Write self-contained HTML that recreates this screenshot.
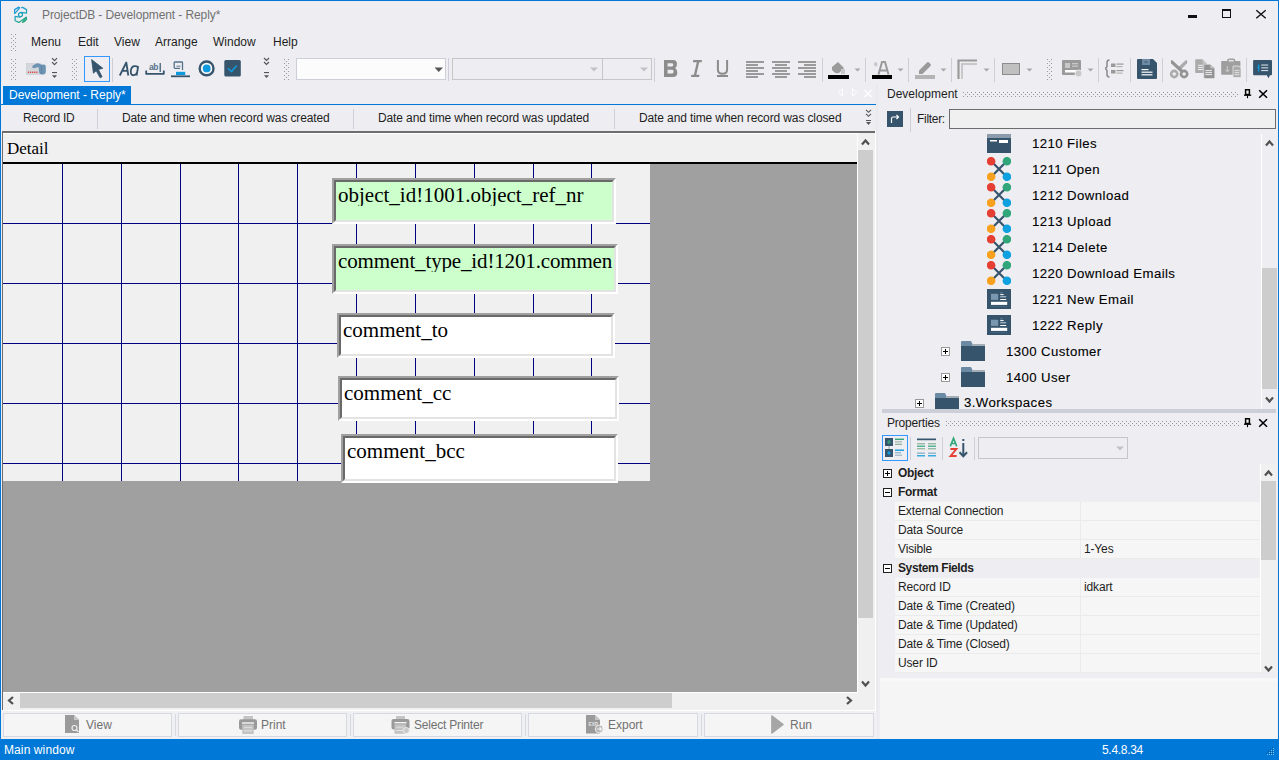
<!DOCTYPE html>
<html><head><meta charset="utf-8">
<style>
*{margin:0;padding:0;box-sizing:border-box}
html,body{width:1279px;height:760px;overflow:hidden;background:#eeeef2;font-family:"Liberation Sans",sans-serif;font-size:12px;color:#1e1e1e;position:relative}
.a{position:absolute}
.t{position:absolute;white-space:nowrap;line-height:12px;font-size:12px}
.ser{font-family:"Liberation Serif",serif;color:#000}
.grip{position:absolute;width:6px;background-image:linear-gradient(#a0a0a8,#a0a0a8),linear-gradient(#a0a0a8,#a0a0a8);background-size:1px 1px,1px 1px;background-repeat:no-repeat}
.sep{position:absolute;width:1px;background:#ccced8}
.hl{position:absolute;height:1px;background:#000080}
.vl{position:absolute;width:1px;background:#000080}
.fld{position:absolute;border-style:solid;border-width:2px;border-color:#a0a0a0 #fff #fff #a0a0a0}
.fld>div{position:absolute;left:0;top:0;right:0;bottom:0;border-style:solid;border-width:2px;border-color:#696969 #e3e3e3 #e3e3e3 #696969}
.ftx{position:absolute;font-family:"Liberation Serif",serif;font-size:21px;line-height:21px;color:#000;white-space:nowrap;overflow:hidden}
.btn{position:absolute;top:713px;height:24px;border:1px solid #d6d8e2;background:#f5f5f5}
.btx{position:absolute;top:719px;color:#717171}
.tr{position:absolute;white-space:nowrap;line-height:12px;font-size:12px;letter-spacing:0.38px;color:#000;transform:scaleX(1.1);transform-origin:0 0;-webkit-text-stroke:0.1px #000}
.pr{position:absolute;left:895px;width:366px;height:19px;background:#f6f6f6;border-bottom:1px solid #ebebeb}
.pr>.vd{position:absolute;left:185px;top:0;width:1px;height:18px;background:#ebebeb}
.pt{position:absolute;white-space:nowrap;line-height:12px;font-size:12px;color:#1e1e1e;letter-spacing:-0.15px}
.exp{position:absolute;width:9px;height:9px;border:1px solid #1e1e1e;background:#fff}
.texp{position:absolute;width:9px;height:9px;border:1px solid #9a9a9a;background:#fff}
.plus:before{content:"";position:absolute;left:1px;top:3px;width:5px;height:1px;background:#000}
.plus:after{content:"";position:absolute;left:3px;top:1px;width:1px;height:5px;background:#000}
.minus:before{content:"";position:absolute;left:1px;top:3px;width:5px;height:1px;background:#000}
</style></head><body>
<svg width="0" height="0" style="position:absolute"><defs><pattern id="gp" width="4" height="4" patternUnits="userSpaceOnUse"><rect x="0" y="0" width="1" height="1" fill="#999"/><rect x="2" y="2" width="1" height="1" fill="#999"/></pattern></defs></svg>
<!-- window border -->
<div class="a" style="left:0;top:0;width:1279px;height:1px;background:#0078d7"></div>
<div class="a" style="left:0;top:0;width:1px;height:760px;background:#0078d7"></div>
<div class="a" style="left:1278px;top:0;width:1px;height:760px;background:#0078d7"></div>

<!-- ===== title bar ===== -->
<svg class="a" style="left:10px;top:4px" width="22" height="22" viewBox="10 4 22 22">
 <defs><linearGradient id="lg" gradientUnits="userSpaceOnUse" x1="15" y1="7" x2="24" y2="23"><stop offset="0" stop-color="#1a96e0"/><stop offset="0.55" stop-color="#21a3b8"/><stop offset="1" stop-color="#2aa86e"/></linearGradient></defs>
 <g fill="none" stroke="url(#lg)" stroke-width="1.25" stroke-linejoin="round">
 <path d="M14.6 13.4 L14.6 9.6 L18.9 7.1 L19.7 7.8 L15.4 12.9 Z"/>
 <path d="M21.2 7.6 L22.6 7.4 L26.5 9.6 L26.5 13.2 L20.8 12.4"/>
 <path d="M18.6 13.6 L20.5 12.5 L22.4 13.6 L22.4 15.8 L20.5 16.9 L18.6 15.8 Z"/>
 <path d="M14.6 16.4 L20.2 17.1 M15 16.6 L15.2 20.8 L18.8 22.4 L26.2 17.2"/>
 <path d="M22.4 22.3 L26.4 17.2 L26.4 19.6 L24.6 21.4 Z"/>
 </g>
</svg>
<div class="t" style="left:42px;top:9px;color:#717171;letter-spacing:-0.1px">ProjectDB - Development - Reply*</div>
<div class="a" style="left:1188px;top:15px;width:9px;height:3px;background:#111"></div>
<div class="a" style="left:1222px;top:9px;width:9px;height:9px;border:1px solid #111;border-top:2px solid #111"></div>
<svg class="a" style="left:1255px;top:9px" width="12" height="11"><path d="M1.3 1.2 L10.7 9.3 M10.7 1.2 L1.3 9.3" stroke="#111" stroke-width="1.4"/></svg>

<!-- ===== menu bar ===== -->
<svg class="a" style="left:11px;top:34px" width="5" height="18"><rect width="5" height="18" fill="url(#gp)"/></svg>
<div class="t" style="left:31px;top:36px">Menu</div>
<div class="t" style="left:78px;top:36px">Edit</div>
<div class="t" style="left:114px;top:36px">View</div>
<div class="t" style="left:155px;top:36px">Arrange</div>
<div class="t" style="left:213px;top:36px">Window</div>
<div class="t" style="left:273px;top:36px">Help</div>

<!-- ===== toolbar ===== -->
<svg class="a" style="left:11px;top:59px" width="5" height="21"><rect width="5" height="21" fill="url(#gp)"/></svg>
<svg class="a" style="left:24px;top:60px" width="24" height="18" viewBox="24 60 24 18">
 <rect x="26.2" y="63.4" width="14.2" height="11.2" fill="#d3d7dc" stroke="#c6cad0" stroke-width="0.5"/>
 <g fill="#e53935"><rect x="27.8" y="71.6" width="1.3" height="1.3"/><rect x="29.9" y="71.6" width="1.3" height="1.3"/><rect x="32" y="71.6" width="1.3" height="1.3"/><rect x="34.1" y="71.6" width="1.3" height="1.3"/><rect x="36.2" y="71.6" width="1.3" height="1.3"/></g>
 <path d="M32.3 67.2 Q32 65.8 33.5 65 L36.5 63.5 Q38 63 39.5 63.8 L41.5 64.8 L44 64.4 Q45.8 64.4 45.8 66.5 L45.8 72 Q45.8 74.4 43.5 74.4 L41.5 74.4 Q39.2 74.4 39 72 L38.6 67 L34.2 68.2 Q32.8 68.4 32.3 67.2 Z" fill="#6f93b2"/>
 <path d="M41.5 64.8 L41.5 74" stroke="#5c7f9e" stroke-width="0.8"/>
</svg>
<svg class="a" style="left:51px;top:57px" width="7" height="22" viewBox="0 0 7 22">
 <path d="M1 1.2 L3.5 3.7 L6 1.2 M1 5.2 L3.5 7.7 L6 5.2" fill="none" stroke="#555" stroke-width="1.2"/>
 <rect x="1" y="15" width="5" height="1.1" fill="#555"/><path d="M1 18.2 L6 18.2 L3.5 21 Z" fill="#555"/>
</svg>
<svg class="a" style="left:72px;top:59px" width="5" height="21"><rect width="5" height="21" fill="url(#gp)"/></svg>
<div class="a" style="left:84px;top:56px;width:26px;height:26px;border:1px solid #3399ff"></div>
<svg class="a" style="left:84px;top:56px" width="26" height="26" viewBox="84 56 26 26">
 <path d="M91.6 59.6 L102.9 68.3 L98.4 69.5 L102.1 76.8 L100.1 77.8 L96.2 70.8 L93.4 73.2 Z" fill="#36556d" stroke="#36556d" stroke-width="0.8" stroke-linejoin="round"/>
</svg>
<div class="sep" style="left:112px;top:58px;height:24px"></div>
<svg class="a" style="left:114px;top:54px" width="80" height="28" viewBox="114 54 80 28">
 <path d="M119.8 75.5 L126.3 62.5 L128.3 75.5 M122.5 70.8 L127.5 70.8" fill="none" stroke="#36556d" stroke-width="1.8" stroke-linejoin="round"/>
 <path d="M138.2 66.2 L136.6 75.5 M137.9 67.2 Q136.5 65.8 134.2 66.2 Q131.2 66.8 130.8 71 Q130.5 75.6 133.6 75.2 Q136 75 137.2 72" fill="none" stroke="#36556d" stroke-width="1.8"/>
 <text x="149" y="69.8" font-family="Liberation Sans" font-size="8.5" font-weight="bold" fill="#55718a" letter-spacing="-0.4">ab</text>
 <rect x="159.6" y="63" width="1.2" height="9" fill="#36556d"/>
 <path d="M146.2 70.5 L146.2 73.8 L163.8 73.8 L163.8 70.5" fill="none" stroke="#36556d" stroke-width="1.8" stroke-linejoin="round"/>
 <path d="M174.2 62 L181.8 62 Q182.5 62 182.5 62.7 L182.5 70 M174.2 62 L174.2 67.5 Q174.2 68.3 175 68.3 L180 68.3" fill="none" stroke="#55718a" stroke-width="1.3"/>
 <rect x="176.5" y="65.5" width="4" height="1.5" fill="#8fa0b0"/>
 <rect x="176" y="71.8" width="9.2" height="3.2" fill="#0e9ade"/>
 <rect x="171" y="75.4" width="19" height="1.8" fill="#36556d"/>
</svg>
<svg class="a" style="left:197px;top:59px" width="19" height="19" viewBox="0 0 19 19">
 <circle cx="9.6" cy="9.4" r="6.9" fill="#f7f7f9" stroke="#36556d" stroke-width="2.4"/>
 <circle cx="9.7" cy="9.4" r="3.9" fill="#0e9ade"/>
</svg>
<svg class="a" style="left:224px;top:60px" width="18" height="18" viewBox="0 0 18 18">
 <rect x="0.3" y="0.1" width="16.5" height="16.5" rx="1.5" fill="#36556d"/>
 <path d="M4 8.2 L7.5 11.6 L12.7 5.4" fill="none" stroke="#0e9ade" stroke-width="1.5"/>
</svg>
<svg class="a" style="left:263px;top:57px" width="7" height="22" viewBox="0 0 7 22">
 <path d="M1 1 L3.5 3.5 L6 1 M1 5 L3.5 7.5 L6 5" fill="none" stroke="#555" stroke-width="1.2"/>
 <rect x="1" y="15" width="5" height="1.1" fill="#555"/><path d="M1 18.2 L6 18.2 L3.5 21 Z" fill="#555"/>
</svg>
<svg class="a" style="left:284px;top:59px" width="5" height="21"><rect width="5" height="21" fill="url(#gp)"/></svg>
<!-- combos -->
<div class="a" style="left:296px;top:58px;width:150px;height:22px;border:1px solid #ccced8;background:#fcfcfc"></div>
<svg class="a" style="left:434px;top:67px" width="10" height="6"><path d="M0.5 0.5 L9 0.5 L4.75 5 Z" fill="#555"/></svg>
<div class="sep" style="left:448px;top:58px;height:23px"></div>
<div class="a" style="left:452px;top:58px;width:151px;height:22px;border:1px solid #c6c6c6"></div>
<div class="a" style="left:602px;top:58px;width:50px;height:22px;border:1px solid #c6c6c6"></div>
<svg class="a" style="left:589px;top:67px" width="10" height="6"><path d="M1 0.5 L9 0.5 L5 4.5 Z" fill="#c2c2c2"/></svg>
<svg class="a" style="left:639px;top:67px" width="10" height="6"><path d="M1 0.5 L9 0.5 L5 4.5 Z" fill="#c2c2c2"/></svg>
<div class="sep" style="left:654px;top:58px;height:24px"></div>
<!-- B I U -->
<svg class="a" style="left:658px;top:56px" width="80" height="26" viewBox="658 56 80 26">
 <path fill-rule="evenodd" fill="#8c8c8c" d="M664 60 L673 60 Q677 60 677 64 Q677 67 675 68 Q677.3 69.2 677.3 72.5 Q677.3 77 673 77 L664 77 Z M667.6 63.2 L667.6 66.4 L672 66.4 Q673.3 66.4 673.3 64.8 Q673.3 63.2 672 63.2 Z M667.6 69.7 L667.6 73.6 L672.2 73.6 Q673.6 73.6 673.6 71.6 Q673.6 69.7 672.2 69.7 Z"/>
 <path fill="#8c8c8c" d="M693.3 60 L702 60 L701.6 62.3 L699.2 62.3 L696.3 74.7 L699.5 74.7 L699.1 77 L691 77 L691.4 74.7 L693.9 74.7 L696.8 62.3 L692.9 62.3 Z"/>
 <path fill="none" stroke="#8c8c8c" stroke-width="2" d="M717.9 60 L717.9 69.5 Q717.9 73.8 722.5 73.8 Q727.1 73.8 727.1 69.5 L727.1 60"/>
 <rect x="717" y="75" width="11" height="2" fill="#8c8c8c"/>
</svg>
<!-- align -->
<svg class="a" style="left:746px;top:61px" width="19" height="17" viewBox="0 0 19 17">
 <g fill="#9a9a9a"><rect x="0" y="0" width="18" height="2"/><rect x="0" y="3" width="12" height="2"/><rect x="0" y="6" width="18" height="2"/><rect x="0" y="9" width="12" height="2"/><rect x="0" y="12" width="18" height="2"/><rect x="0" y="15" width="12" height="2"/></g>
</svg>
<svg class="a" style="left:772px;top:61px" width="19" height="17" viewBox="0 0 19 17">
 <g fill="#9a9a9a"><rect x="0" y="0" width="18" height="2"/><rect x="3" y="3" width="12" height="2"/><rect x="0" y="6" width="18" height="2"/><rect x="3" y="9" width="12" height="2"/><rect x="0" y="12" width="18" height="2"/><rect x="3" y="15" width="12" height="2"/></g>
</svg>
<svg class="a" style="left:798px;top:61px" width="19" height="17" viewBox="0 0 19 17">
 <g fill="#9a9a9a"><rect x="0" y="0" width="18" height="2"/><rect x="6" y="3" width="12" height="2"/><rect x="0" y="6" width="18" height="2"/><rect x="6" y="9" width="12" height="2"/><rect x="0" y="12" width="18" height="2"/><rect x="6" y="15" width="12" height="2"/></g>
</svg>
<div class="sep" style="left:822px;top:58px;height:24px"></div>
<!-- fill color -->
<svg class="a" style="left:828px;top:61px" width="22" height="19" viewBox="0 0 22 19">
 <path d="M4 6 L10 1 L16 7 L11 12 Q8 13 6 11 L4 9 Z" fill="#9a9a9a"/>
 <rect x="13" y="8" width="4" height="5" fill="#c8c8c8"/>
 <rect x="0" y="14" width="21" height="4" fill="#000"/>
</svg>
<svg class="a" style="left:854px;top:68px" width="8" height="5"><path d="M0.5 0.5 L6.5 0.5 L3.5 3.5 Z" fill="#a8a8a8"/></svg>
<div class="sep" style="left:865px;top:58px;height:24px"></div>
<svg class="a" style="left:871px;top:61px" width="22" height="19" viewBox="0 0 22 19">
 <path d="M7.5 13.5 L11 1 L14 1 L17.5 13.5 M9 9.5 L16 9.5" fill="none" stroke="#9a9a9a" stroke-width="2"/>
 <ellipse cx="4.8" cy="3.3" rx="1.6" ry="2.2" fill="#c8c8c8"/>
 <rect x="1" y="14" width="20" height="4" fill="#000"/>
</svg>
<svg class="a" style="left:897px;top:68px" width="8" height="5"><path d="M0.5 0.5 L6.5 0.5 L3.5 3.5 Z" fill="#a8a8a8"/></svg>
<div class="sep" style="left:908px;top:58px;height:24px"></div>
<svg class="a" style="left:914px;top:61px" width="22" height="19" viewBox="0 0 22 19">
 <path d="M5 13 L5 9.5 L13 1.5 Q14 0.5 15 1.5 L16.5 3 Q17.5 4 16.5 5 L8.5 13 Z" fill="#9a9a9a"/>
 <rect x="1" y="14" width="20" height="4" fill="#b4b4b4"/>
</svg>
<svg class="a" style="left:940px;top:68px" width="8" height="5"><path d="M0.5 0.5 L6.5 0.5 L3.5 3.5 Z" fill="#a8a8a8"/></svg>
<div class="sep" style="left:951px;top:58px;height:24px"></div>
<svg class="a" style="left:957px;top:59px" width="22" height="21" viewBox="0 0 22 21">
 <path d="M1.5 20 L1.5 1.5 L20 1.5" fill="none" stroke="#9a9a9a" stroke-width="2.2"/>
 <path d="M5 20 L5 5 L20 5" fill="none" stroke="#c8c8c8" stroke-width="2"/>
</svg>
<svg class="a" style="left:983px;top:68px" width="8" height="5"><path d="M0.5 0.5 L6.5 0.5 L3.5 3.5 Z" fill="#a8a8a8"/></svg>
<div class="sep" style="left:994px;top:58px;height:24px"></div>
<div class="a" style="left:1002px;top:63px;width:18px;height:12px;background:#c0c0c0;border:1.5px solid #8c8c8c"></div>
<svg class="a" style="left:1026px;top:68px" width="8" height="5"><path d="M0.5 0.5 L6.5 0.5 L3.5 3.5 Z" fill="#a8a8a8"/></svg>
<svg class="a" style="left:1047px;top:59px" width="5" height="21"><rect width="5" height="21" fill="url(#gp)"/></svg>
<svg class="a" style="left:1062px;top:60px" width="21" height="18" viewBox="0 0 21 18">
 <rect x="0" y="0" width="19" height="15" rx="1" fill="#9a9a9a"/>
 <rect x="3" y="3" width="5" height="5" fill="#c8c8c8"/><rect x="10" y="3" width="6" height="1.3" fill="#c8c8c8"/><rect x="10" y="5.5" width="6" height="1.3" fill="#c8c8c8"/>
 <rect x="3" y="10" width="13" height="2.5" fill="#fff"/>
 <circle cx="16.5" cy="13.5" r="3.5" fill="#c8c8c8" stroke="#eee" stroke-width="1"/>
</svg>
<svg class="a" style="left:1087px;top:68px" width="8" height="5"><path d="M0.5 0.5 L6.5 0.5 L3.5 3.5 Z" fill="#a8a8a8"/></svg>
<div class="sep" style="left:1098px;top:58px;height:24px"></div>
<svg class="a" style="left:1105px;top:59px" width="20" height="19" viewBox="0 0 20 19">
 <path d="M4.5 1 Q2 1 2 3.5 L2 7.5 L0.5 9.5 L2 11.5 L2 15.5 Q2 18 4.5 18" fill="none" stroke="#8a8a8a" stroke-width="1.5"/>
 <rect x="6" y="4.5" width="4.5" height="3.5" fill="#9a9a9a"/><rect x="11.5" y="4.5" width="7" height="1.2" fill="#9a9a9a"/><rect x="11.5" y="7" width="6" height="1.2" fill="#b4b4b4"/>
 <rect x="6" y="11" width="4.5" height="3.5" fill="#9a9a9a"/><rect x="11.5" y="11" width="7" height="1.2" fill="#9a9a9a"/><rect x="11.5" y="13.5" width="6" height="1.2" fill="#b4b4b4"/>
</svg>
<div class="sep" style="left:1130px;top:58px;height:24px"></div>
<svg class="a" style="left:1137px;top:59px" width="21" height="21" viewBox="0 0 21 21">
 <path d="M0 1 Q0 0 1 0 L16 0 L20 4 L20 19 Q20 20 19 20 L1 20 Q0 20 0 19 Z" fill="#36556d"/>
 <rect x="5" y="0" width="8" height="6" fill="#6c8aa3"/><rect x="7.5" y="2.5" width="3" height="1" fill="#36556d"/>
 <rect x="4.5" y="10" width="7" height="1.2" fill="#fff"/><rect x="4.5" y="12.6" width="11" height="1.2" fill="#fff"/><rect x="4.5" y="15.2" width="11" height="1.2" fill="#fff"/>
</svg>
<div class="sep" style="left:1162px;top:58px;height:24px"></div>
<svg class="a" style="left:1166px;top:56px" width="52" height="26" viewBox="1166 56 52 26">
 <path d="M1186.3 59.8 Q1188 61.2 1187 63.2 L1181 69.5 L1178.4 67 Z" fill="#ababab"/>
 <path d="M1171.8 59.8 Q1170 61.4 1171.2 63.4 L1181.5 73 L1183.4 70.6 Z" fill="#939393"/>
 <circle cx="1174.2" cy="74" r="3.1" fill="none" stroke="#ababab" stroke-width="2.6"/>
 <circle cx="1184.1" cy="74" r="3.1" fill="none" stroke="#939393" stroke-width="2.6"/>
 <path d="M1196 59.3 L1202.6 59.3 L1206.8 63.5 L1206.8 73 L1196 73 Q1195.2 73 1195.2 72.2 L1195.2 60.1 Q1195.2 59.3 1196 59.3 Z" fill="#ababab"/>
 <path d="M1202.6 59.3 L1206.8 63.5 L1202.6 63.5 Z" fill="#c8c8c8"/>
 <g fill="#eeeef2"><rect x="1198" y="64.8" width="5" height="1"/><rect x="1198" y="66.9" width="5" height="1"/><rect x="1198" y="69" width="5" height="1"/></g>
 <path d="M1203.8 64.2 L1210.2 64.2 L1214.8 68.6 L1214.8 77.6 Q1214.8 78.6 1213.8 78.6 L1204.8 78.6 Q1203.8 78.6 1203.8 77.6 Z" fill="#939393" stroke="#eeeef2" stroke-width="0.6"/>
 <path d="M1210.2 64.2 L1214.8 68.6 L1210.2 68.6 Z" fill="#bdbdbd"/>
 <g fill="#eeeef2"><rect x="1205.4" y="70.1" width="6.6" height="1"/><rect x="1205.4" y="72.1" width="6.6" height="1"/><rect x="1205.4" y="74.1" width="6.6" height="1"/></g>
</svg>
<svg class="a" style="left:1218px;top:56px" width="26" height="26" viewBox="1218 56 26 26">
 <rect x="1221.2" y="61" width="19.2" height="13.8" rx="0.8" fill="#9e9e9e"/>
 <path d="M1227.8 62 L1227.8 60.8 Q1227.8 59.2 1229.4 59.2 L1233 59.2 Q1234.6 59.2 1234.6 60.8 L1234.6 62" fill="none" stroke="#9e9e9e" stroke-width="1.6"/>
 <rect x="1228.6" y="61.2" width="5.2" height="1" fill="#c0c0c0"/>
 <path d="M1227.4 66 L1227.4 71.5 M1225.5 69.6 L1227.4 71.6 L1229.3 69.6" fill="none" stroke="#c4c4c4" stroke-width="1.1"/>
 <path d="M1233 66 L1239 66 L1241 68 L1241 77.5 L1233 77.5 Z" fill="#ababab" stroke="#eeeef2" stroke-width="0.7"/>
 <g fill="#e6e6e6"><rect x="1234.6" y="70.2" width="4.8" height="0.9"/><rect x="1234.6" y="72.2" width="4.8" height="0.9"/><rect x="1234.6" y="74.2" width="4.8" height="0.9"/></g>
</svg>
<div class="sep" style="left:1246px;top:58px;height:24px"></div>
<svg class="a" style="left:1252px;top:59px" width="22" height="21" viewBox="1252 59 22 21">
 <path d="M1254 60.1 L1271 60.1 Q1272 60.1 1272 61.1 L1272 74.3 Q1272 75.3 1271 75.3 L1270 75.3 L1268.5 78.2 L1266.8 75.3 L1254 75.3 Q1253.1 75.3 1253.1 74.3 L1253.1 61.1 Q1253.1 60.1 1254 60.1 Z" fill="#36556d"/>
 <circle cx="1258.7" cy="65.4" r="0.9" fill="#0e9ade"/><path d="M1257.3 67.4 L1258.7 66.9 L1258.7 71.4" fill="none" stroke="#0e9ade" stroke-width="1.3"/>
 <g fill="#d5dde4"><rect x="1261.2" y="64.5" width="7" height="1.1"/><rect x="1261.2" y="67.3" width="7" height="1.1"/><rect x="1261.2" y="70" width="7" height="1.1"/></g>
</svg>

<!-- ===== document tab ===== -->
<div class="a" style="left:3px;top:86px;width:128px;height:18px;background:#0078d7"></div>
<div class="t" style="left:9px;top:89px;color:#fff">Development - Reply*</div>
<svg class="a" style="left:837px;top:88px" width="38" height="10" viewBox="0 0 38 10">
 <path d="M5.5 0.7 L5.5 8.3 L1.2 4.5 Z" fill="none" stroke="#fff" stroke-width="0.9"/>
 <path d="M15.5 0.7 L15.5 8.3 L19.8 4.5 Z" fill="none" stroke="#fff" stroke-width="0.9"/>
 <path d="M27.5 2 L34.5 9 M34.5 2 L27.5 9" stroke="#fff" stroke-width="1.3"/>
</svg>
<div class="a" style="left:0;top:104px;width:876px;height:1px;background:#0078d7"></div>

<!-- ===== column header ===== -->
<div class="t" style="left:23px;top:112px;letter-spacing:-0.3px">Record ID</div>
<div class="sep" style="left:97px;top:109px;height:20px"></div>
<div class="t" style="left:122px;top:112px;letter-spacing:-0.12px">Date and time when record was created</div>
<div class="sep" style="left:353px;top:109px;height:20px"></div>
<div class="t" style="left:378px;top:112px;letter-spacing:-0.12px">Date and time when record was updated</div>
<div class="sep" style="left:614px;top:109px;height:20px"></div>
<div class="t" style="left:639px;top:112px;letter-spacing:-0.12px">Date and time when record was closed</div>
<svg class="a" style="left:865px;top:109px" width="7" height="17" viewBox="0 0 7 17">
 <path d="M1 0.8 L3.5 3.3 L6 0.8 M1 4.8 L3.5 7.3 L6 4.8" fill="none" stroke="#555" stroke-width="1.1"/>
 <rect x="1" y="11" width="5" height="1" fill="#555"/><path d="M1 13 L6 13 L3.5 16 Z" fill="#555"/>
</svg>

<!-- ===== design surface ===== -->
<div class="a" style="left:2px;top:131px;width:873px;height:2px;background:#6d6d6d"></div>
<div class="a" style="left:2px;top:131px;width:1px;height:579px;background:#6d6d6d"></div>
<div class="a" style="left:875px;top:131px;width:1px;height:580px;background:#fff"></div><div class="a" style="left:876px;top:85px;width:2px;height:654px;background:#e9e9ee"></div>
<div class="a" style="left:2px;top:710px;width:874px;height:1px;background:#fff"></div>
<div class="a" style="left:3px;top:133px;width:854px;height:559px;background:#a0a0a0"></div>
<div class="a" style="left:3px;top:133px;width:854px;height:1px;background:#fff"></div>
<div class="a" style="left:3px;top:134px;width:854px;height:28px;background:#f0f0f0"></div>
<div class="t ser" style="left:7px;top:140px;font-size:17px;line-height:17px">Detail</div>
<div class="a" style="left:3px;top:162px;width:854px;height:2px;background:#000"></div>
<div class="a" style="left:3px;top:164px;width:647px;height:317px;background:#f0f0f0"></div>
<!-- grid -->
<div class="vl" style="left:62px;top:164px;height:317px"></div>
<div class="vl" style="left:121px;top:164px;height:317px"></div>
<div class="vl" style="left:180px;top:164px;height:317px"></div>
<div class="vl" style="left:238px;top:164px;height:317px"></div>
<div class="vl" style="left:297px;top:164px;height:317px"></div>
<div class="vl" style="left:356px;top:164px;height:317px"></div>
<div class="vl" style="left:415px;top:164px;height:317px"></div>
<div class="vl" style="left:474px;top:164px;height:317px"></div>
<div class="vl" style="left:533px;top:164px;height:317px"></div>
<div class="vl" style="left:591px;top:164px;height:317px"></div>
<div class="hl" style="left:3px;top:223px;width:647px"></div>
<div class="hl" style="left:3px;top:283px;width:647px"></div>
<div class="hl" style="left:3px;top:343px;width:647px"></div>
<div class="hl" style="left:3px;top:403px;width:647px"></div>
<div class="hl" style="left:3px;top:463px;width:647px"></div>
<!-- fields -->
<div class="fld" style="left:332px;top:178px;width:284px;height:46px;background:#ccffcc"><div></div></div>
<div class="ftx" style="left:338px;top:185px;width:274px">object_id!1001.object_ref_nr</div>
<div class="fld" style="left:332px;top:244px;width:286px;height:50px;background:#ccffcc"><div></div></div>
<div class="ftx" style="left:338px;top:251px;width:275px;letter-spacing:-0.15px">comment_type_id!1201.commen</div>
<div class="fld" style="left:337px;top:313px;width:278px;height:45px;background:#fff"><div></div></div>
<div class="ftx" style="left:343px;top:320px;width:268px">comment_to</div>
<div class="fld" style="left:338px;top:376px;width:281px;height:45px;background:#fff"><div></div></div>
<div class="ftx" style="left:344px;top:383px;width:271px">comment_cc</div>
<div class="fld" style="left:341px;top:434px;width:277px;height:49px;background:#fff"><div></div></div>
<div class="ftx" style="left:347px;top:441px;width:267px">comment_bcc</div>

<!-- vertical scrollbar -->
<div class="a" style="left:857px;top:133px;width:1px;height:576px;background:#fff"></div>
<div class="a" style="left:858px;top:133px;width:17px;height:577px;background:#f0f0f0"></div>
<div class="a" style="left:858px;top:150px;width:15px;height:468px;background:#cdcdcd"></div>
<svg class="a" style="left:861px;top:138px" width="9" height="8"><path d="M1 6.5 L4.5 2.5 L8 6.5" fill="none" stroke="#505050" stroke-width="2.2"/></svg>
<svg class="a" style="left:861px;top:680px" width="9" height="8"><path d="M1 1.5 L4.5 5.5 L8 1.5" fill="none" stroke="#505050" stroke-width="2.2"/></svg>
<!-- horizontal scrollbar -->
<div class="a" style="left:3px;top:692px;width:854px;height:1px;background:#fff"></div>
<div class="a" style="left:3px;top:693px;width:871px;height:17px;background:#f0f0f0"></div>
<div class="a" style="left:20px;top:693px;width:652px;height:15px;background:#cdcdcd"></div>
<svg class="a" style="left:7px;top:696px" width="8" height="9"><path d="M6 1 L2 4.5 L6 8" fill="none" stroke="#505050" stroke-width="2.2"/></svg>
<svg class="a" style="left:845px;top:696px" width="8" height="9"><path d="M2 1 L6 4.5 L2 8" fill="none" stroke="#505050" stroke-width="2.2"/></svg>

<!-- ===== bottom buttons ===== -->
<div class="a" style="left:1px;top:711px;width:876px;height:28px;background:#f0f0f3"></div>
<div class="btn" style="left:3px;width:169px"></div>
<div class="btn" style="left:178px;width:169px"></div>
<div class="btn" style="left:353px;width:169px"></div>
<div class="btn" style="left:528px;width:170px"></div>
<div class="btn" style="left:704px;width:170px"></div>
<div class="sep" style="left:175px;top:714px;height:22px;background:#d6d8e2"></div>
<div class="sep" style="left:350px;top:714px;height:22px;background:#d6d8e2"></div>
<div class="sep" style="left:525px;top:714px;height:22px;background:#d6d8e2"></div>
<div class="sep" style="left:701px;top:714px;height:22px;background:#d6d8e2"></div>
<svg class="a" style="left:65px;top:715px" width="16" height="19" viewBox="0 0 16 19">
 <path d="M0 0 L9 0 L14 5 L14 18 L0 18 Z" fill="#9a9a9a"/><path d="M9 0 L14 5 L9 5 Z" fill="#c8c8c8"/>
 <circle cx="9.5" cy="13" r="2.5" fill="none" stroke="#eee" stroke-width="1.2"/><path d="M11.3 14.8 L13.5 17" stroke="#eee" stroke-width="1.3"/>
</svg>
<div class="btx t" style="left:86px">View</div>
<svg class="a" style="left:239px;top:716px" width="18" height="19" viewBox="0 0 18 19">
 <rect x="4.5" y="0" width="9.5" height="4" fill="#c4c4c4"/><rect x="0" y="3.3" width="18" height="10.5" rx="2" fill="#9a9a9a"/>
 <rect x="3" y="6.3" width="12" height="1.4" fill="#f5f5f5"/>
 <rect x="3.3" y="8.6" width="11.4" height="9.4" fill="#c4c4c4"/><rect x="5.3" y="11" width="7.5" height="1" fill="#dcdcdc"/><rect x="5.3" y="14.3" width="7.5" height="1" fill="#e4e4e4"/>
</svg>
<div class="btx t" style="left:261px">Print</div>
<svg class="a" style="left:391px;top:716px" width="19" height="19" viewBox="0 0 19 19">
 <rect x="5" y="0" width="9" height="3.5" fill="#c4c4c4"/><rect x="0.5" y="3" width="18" height="10.5" rx="2" fill="#9a9a9a"/>
 <rect x="3.5" y="6" width="12" height="1.4" fill="#f5f5f5"/>
 <rect x="3.5" y="8.3" width="11.5" height="9.5" fill="#c4c4c4"/><rect x="5.5" y="10.8" width="7" height="1" fill="#dcdcdc"/><rect x="5.5" y="14" width="7" height="1" fill="#e4e4e4"/>
 <circle cx="15.3" cy="14.5" r="3" fill="#c8c8c8" stroke="#f5f5f5" stroke-width="0.8"/>
</svg>
<div class="btx t" style="left:414px;letter-spacing:-0.2px">Select Printer</div>
<svg class="a" style="left:585px;top:715px" width="20" height="20" viewBox="0 0 20 20">
 <path d="M1 0 L10 0 L15 5 L15 18.5 L1 18.5 Z" fill="#9a9a9a"/><path d="M10 0 L15 5 L10 5 Z" fill="#c4c4c4"/>
 <text x="3.6" y="10.5" font-family="Liberation Sans" font-size="4.6" font-weight="bold" fill="#e6e6e6">EXP</text>
 <circle cx="14.2" cy="14" r="3.9" fill="#b0b0b0" stroke="#f5f5f5" stroke-width="0.9"/><path d="M11.8 14 L16.2 14 M14.6 12.3 L16.4 14 L14.6 15.7" fill="none" stroke="#f2f2f2" stroke-width="1.2"/>
</svg>
<div class="btx t" style="left:608px">Export</div>
<svg class="a" style="left:771px;top:715px" width="14" height="19"><path d="M0.8 0.8 L12.2 9.5 L0.8 18.2 Z" fill="#a6a6a6" stroke="#a6a6a6" stroke-width="1.2" stroke-linejoin="round"/></svg>
<div class="btx t" style="left:790px">Run</div>

<!-- ===== right panel: Development ===== -->
<div class="t" style="left:887px;top:88px">Development</div>
<svg class="a" style="left:963px;top:92px" width="276" height="5"><rect width="276" height="5" fill="url(#gp)"/></svg>
<svg class="a" style="left:1243px;top:89px" width="10" height="11" viewBox="0 0 10 11"><path d="M2.6 0.8 L6.4 0.8 L6.4 5.5 L2.6 5.5 Z" fill="none" stroke="#000" stroke-width="1.5"/><path d="M1 6.2 L8.2 6.2" stroke="#000" stroke-width="1.3"/><path d="M4.5 6.5 L4.5 9.2" stroke="#000" stroke-width="1.1"/></svg>
<svg class="a" style="left:1258px;top:89px" width="11" height="10"><path d="M1.2 1.2 L9 8.8 M9 1.2 L1.2 8.8" stroke="#000" stroke-width="1.6"/></svg>
<svg class="a" style="left:887px;top:111px" width="16" height="16" viewBox="0 0 16 16">
 <rect width="16" height="16" fill="#36556d"/>
 <path d="M4.5 12 L4.5 7.5 Q4.5 6 6 6 L11.5 6 M9.5 4 L11.5 6 L9.5 8" fill="none" stroke="#fff" stroke-width="1.2"/>
</svg>
<div class="sep" style="left:910px;top:108px;height:24px"></div>
<div class="t" style="left:917px;top:113px;letter-spacing:-0.3px">Filter:</div>
<div class="a" style="left:949px;top:109px;width:327px;height:20px;border:1px solid #6d6d6d;background:#f0f0f0"></div>

<!-- tree -->
<svg class="a" style="left:987px;top:134px" width="24" height="19" viewBox="0 0 24 19">
 <rect width="24" height="19" fill="#36556d"/><rect width="24" height="4" fill="#8b9bab"/>
 <rect x="3" y="6" width="7" height="1.5" fill="#fff"/><rect x="12" y="6" width="9" height="3" fill="#fff"/>
</svg>
<div class="tr" style="left:1032px;top:138px">1210 Files</div>
<!-- workflow icons defined via symbol -->
<svg width="0" height="0" style="position:absolute">
 <defs><symbol id="wf" viewBox="0 0 24 24" overflow="visible">
  <path d="M4 4 L20 20 M20 4 L4 20" stroke="#36556d" stroke-width="2.2"/>
  <circle cx="4.1" cy="4.2" r="4.3" fill="#e53e33"/><circle cx="19.9" cy="4.2" r="4.3" fill="#31a67a"/>
  <circle cx="4.1" cy="19.8" r="4.3" fill="#f8a11e"/><circle cx="19.9" cy="19.8" r="4.3" fill="#0ea1e0"/>
 </symbol>
 <symbol id="fm" viewBox="0 0 24 20">
  <rect width="24" height="20" fill="#36556d"/>
  <rect x="4" y="5" width="7.2" height="5.9" fill="#7a97b0"/><rect x="13.2" y="3.4" width="2.5" height="0.9" fill="#6f8aa2"/><rect x="13.2" y="5.1" width="3.5" height="1" fill="#fff"/><rect x="13.2" y="7.3" width="6" height="1" fill="#c9d3dc"/><rect x="13.2" y="10" width="6" height="1" fill="#fff"/>
  <rect x="3.2" y="4" width="7" height="0.6" fill="#4f6e87"/><rect x="4" y="12.8" width="16.2" height="3.1" fill="#fff"/><rect x="4" y="17" width="16" height="0.6" fill="#4f6e87"/>
 </symbol>
 <symbol id="fo" viewBox="0 0 24 20">
  <path d="M0 1 Q0 0 1 0 L10 0 L11.5 3 L24 3 L24 5 L0 5 Z" fill="#6b8aa4"/>
  <rect x="11" y="3" width="13" height="2" fill="#a5adb5"/>
  <rect x="0" y="5" width="24" height="15" fill="#36556d"/>
 </symbol></defs>
</svg>
<svg class="a" style="left:987px;top:157px" width="24" height="24"><use href="#wf"/></svg>
<div class="tr" style="left:1032px;top:164px">1211 Open</div>
<svg class="a" style="left:987px;top:183px" width="24" height="24"><use href="#wf"/></svg>
<div class="tr" style="left:1032px;top:190px">1212 Download</div>
<svg class="a" style="left:987px;top:209px" width="24" height="24"><use href="#wf"/></svg>
<div class="tr" style="left:1032px;top:216px">1213 Upload</div>
<svg class="a" style="left:987px;top:235px" width="24" height="24"><use href="#wf"/></svg>
<div class="tr" style="left:1032px;top:242px">1214 Delete</div>
<svg class="a" style="left:987px;top:261px" width="24" height="24"><use href="#wf"/></svg>
<div class="tr" style="left:1032px;top:268px">1220 Download Emails</div>
<svg class="a" style="left:987px;top:289px" width="24" height="20"><use href="#fm"/></svg>
<div class="tr" style="left:1032px;top:294px">1221 New Email</div>
<svg class="a" style="left:987px;top:315px" width="24" height="20"><use href="#fm"/></svg>
<div class="tr" style="left:1032px;top:320px">1222 Reply</div>
<div class="texp plus" style="left:941px;top:347px"></div>
<svg class="a" style="left:961px;top:341px" width="24" height="20"><use href="#fo"/></svg>
<div class="tr" style="left:1006px;top:346px">1300 Customer</div>
<div class="texp plus" style="left:941px;top:373px"></div>
<svg class="a" style="left:961px;top:367px" width="24" height="20"><use href="#fo"/></svg>
<div class="tr" style="left:1006px;top:372px">1400 User</div>
<div class="a" style="left:882px;top:389px;width:378px;height:20px;overflow:hidden">
 <div class="texp plus" style="left:33px;top:10px"></div>
 <svg class="a" style="left:53px;top:4px" width="24" height="20"><use href="#fo"/></svg>
 <div class="tr" style="left:82px;top:8px">3.Workspaces</div>
</div>
<!-- tree scrollbar -->
<div class="a" style="left:1261px;top:134px;width:1px;height:275px;background:#fff"></div>
<div class="a" style="left:1262px;top:268px;width:15px;height:121px;background:#cdcdcd"></div>
<svg class="a" style="left:1265px;top:139px" width="9" height="8"><path d="M1 6.5 L4.5 2.5 L8 6.5" fill="none" stroke="#505050" stroke-width="2.2"/></svg>
<svg class="a" style="left:1265px;top:396px" width="9" height="8"><path d="M1 1.5 L4.5 5.5 L8 1.5" fill="none" stroke="#505050" stroke-width="2.2"/></svg>
<!-- splitter -->
<div class="a" style="left:882px;top:409px;width:394px;height:4px;background:#ccced8"></div>

<!-- ===== Properties ===== -->
<div class="t" style="left:887px;top:417px;letter-spacing:-0.2px">Properties</div>
<svg class="a" style="left:946px;top:421px" width="293" height="5"><rect width="293" height="5" fill="url(#gp)"/></svg>
<svg class="a" style="left:1243px;top:418px" width="10" height="11" viewBox="0 0 10 11"><path d="M2.6 0.8 L6.4 0.8 L6.4 5.5 L2.6 5.5 Z" fill="none" stroke="#000" stroke-width="1.5"/><path d="M1 6.2 L8.2 6.2" stroke="#000" stroke-width="1.3"/><path d="M4.5 6.5 L4.5 9.2" stroke="#000" stroke-width="1.1"/></svg>
<svg class="a" style="left:1258px;top:418px" width="11" height="10"><path d="M1.2 1.2 L9 8.8 M9 1.2 L1.2 8.8" stroke="#000" stroke-width="1.6"/></svg>
<div class="a" style="left:882px;top:435px;width:26px;height:26px;border:1px solid #3399ff"></div>
<svg class="a" style="left:878px;top:430px" width="96" height="36" viewBox="878 430 96 36">
 <rect x="885" y="438" width="8" height="8" fill="#36556d"/><rect x="885" y="449" width="8" height="8" fill="#36556d"/><rect x="888.5" y="446" width="1" height="3" fill="#9aa"/>
 <path d="M889 440 L889 444 M887 442 L891 442" stroke="#31a67a" stroke-width="1.2"/><path d="M889 451 L891 453 L889 455 L887 453 Z" fill="#0e9ade"/>
 <rect x="895" y="438.6" width="9" height="1.4" fill="#31a67a"/><rect x="895" y="441.2" width="7" height="1.3" fill="#a9b7b0"/><rect x="895" y="443.7" width="7" height="1.3" fill="#8fb5a0"/>
 <rect x="895" y="449.5" width="9" height="1.4" fill="#0e9ade"/><rect x="895" y="452.1" width="6" height="1.3" fill="#8fb5c8"/><rect x="895" y="454.6" width="7" height="1.3" fill="#a3b9c6"/>
 <rect x="917" y="438.5" width="19" height="1.7" fill="#36556d"/>
 <g fill="#9ab8a6"><rect x="917" y="443" width="8" height="1.4"/><rect x="928" y="443" width="8" height="1.4"/><rect x="917" y="448" width="8" height="1.4"/><rect x="928" y="448" width="8" height="1.4"/></g>
 <g fill="#31a67a"><rect x="917" y="445.6" width="8" height="1.2"/><rect x="928" y="445.6" width="8" height="1.2"/></g>
 <g fill="#91b4c8"><rect x="917" y="452.5" width="8" height="1.4"/><rect x="928" y="452.5" width="8" height="1.4"/></g>
 <g fill="#0e9ade"><rect x="917" y="455.2" width="8" height="1.2"/><rect x="928" y="455.2" width="8" height="1.2"/></g>
 <path d="M950.3 446.3 L953.5 438.2 L956.7 446.3 M951.6 443.5 L955.4 443.5" fill="none" stroke="#31a67a" stroke-width="1.7"/>
 <path d="M950.4 449 L956.4 449 L950.6 456 L956.6 456" fill="none" stroke="#e53e33" stroke-width="1.9"/>
 <rect x="962.3" y="439" width="2" height="2" fill="#36556d"/>
 <path d="M963.3 443 L963.3 456 M959.5 452.3 L963.3 456.2 L967.1 452.3" fill="none" stroke="#36556d" stroke-width="2"/>
</svg>
<div class="sep" style="left:910px;top:437px;height:23px"></div>
<div class="sep" style="left:942px;top:437px;height:23px"></div>
<div class="sep" style="left:974px;top:437px;height:23px"></div>
<div class="a" style="left:978px;top:437px;width:150px;height:22px;border:1px solid #c6c6c6"></div>
<svg class="a" style="left:1115px;top:446px" width="10" height="6"><path d="M1 0.5 L9 0.5 L5 4.5 Z" fill="#c2c2c2"/></svg>

<!-- property grid -->
<div class="exp plus" style="left:883px;top:469px"></div>
<div class="pt" style="left:898px;top:467px;font-weight:bold;letter-spacing:-0.3px">Object</div>
<div class="exp minus" style="left:883px;top:488px"></div>
<div class="pt" style="left:898px;top:486px;font-weight:bold;letter-spacing:-0.3px">Format</div>
<div class="pr" style="top:502px"><div class="vd"></div></div>
<div class="pt" style="left:898px;top:505px;">External Connection</div>
<div class="pr" style="top:521px"><div class="vd"></div></div>
<div class="pt" style="left:898px;top:524px;">Data Source</div>
<div class="pr" style="top:540px"><div class="vd"></div></div>
<div class="pt" style="left:898px;top:543px">Visible</div>
<div class="pt" style="left:1084px;top:543px">1-Yes</div>
<div class="exp minus" style="left:883px;top:564px"></div>
<div class="pt" style="left:898px;top:562px;font-weight:bold;letter-spacing:-0.4px">System Fields</div>
<div class="pr" style="top:578px"><div class="vd"></div></div>
<div class="pt" style="left:898px;top:581px">Record ID</div>
<div class="pt" style="left:1084px;top:581px">idkart</div>
<div class="pr" style="top:597px"><div class="vd"></div></div>
<div class="pt" style="left:898px;top:600px;">Date &amp; Time (Created)</div>
<div class="pr" style="top:616px"><div class="vd"></div></div>
<div class="pt" style="left:898px;top:619px;">Date &amp; Time (Updated)</div>
<div class="pr" style="top:635px"><div class="vd"></div></div>
<div class="pt" style="left:898px;top:638px;">Date &amp; Time (Closed)</div>
<div class="pr" style="top:654px"><div class="vd"></div></div>
<div class="pt" style="left:898px;top:657px">User ID</div>
<!-- prop scrollbar -->
<div class="a" style="left:1260px;top:464px;width:1px;height:208px;background:#fff"></div>
<div class="a" style="left:1261px;top:464px;width:15px;height:208px;background:#f0f0f0"></div>
<div class="a" style="left:1261px;top:481px;width:15px;height:79px;background:#cdcdcd"></div>
<svg class="a" style="left:1264px;top:469px" width="9" height="8"><path d="M1 6.5 L4.5 2.5 L8 6.5" fill="none" stroke="#505050" stroke-width="2.2"/></svg>
<svg class="a" style="left:1264px;top:665px" width="9" height="8"><path d="M1 1.5 L4.5 5.5 L8 1.5" fill="none" stroke="#505050" stroke-width="2.2"/></svg>
<!-- description -->
<div class="a" style="left:880px;top:678px;width:397px;height:61px;background:#f5f5f5;border-top:3px solid #f8f8f8"></div>

<!-- ===== status bar ===== -->
<div class="a" style="left:0;top:739px;width:1279px;height:21px;background:#0078d7"></div>
<div class="t" style="left:4px;top:744px;color:#fff;letter-spacing:0.1px">Main window</div>
<div class="t" style="left:1102px;top:744px;color:#fff;letter-spacing:-0.3px">5.4.8.34</div>
<svg class="a" style="left:1266px;top:747px" width="9" height="9"><g fill="#005a9e"><rect x="6" y="0" width="1" height="1"/><rect x="4" y="2" width="1" height="1"/><rect x="6" y="2" width="1" height="1"/><rect x="2" y="4" width="1" height="1"/><rect x="4" y="4" width="1" height="1"/><rect x="6" y="4" width="1" height="1"/><rect x="0" y="6" width="1" height="1"/><rect x="2" y="6" width="1" height="1"/><rect x="4" y="6" width="1" height="1"/><rect x="6" y="6" width="1" height="1"/></g><g fill="#7cc4f8"><rect x="7" y="1" width="1" height="1"/><rect x="5" y="3" width="1" height="1"/><rect x="7" y="3" width="1" height="1"/><rect x="3" y="5" width="1" height="1"/><rect x="5" y="5" width="1" height="1"/><rect x="7" y="5" width="1" height="1"/><rect x="1" y="7" width="1" height="1"/><rect x="3" y="7" width="1" height="1"/><rect x="5" y="7" width="1" height="1"/><rect x="7" y="7" width="1" height="1"/></g></svg>
</body></html>
